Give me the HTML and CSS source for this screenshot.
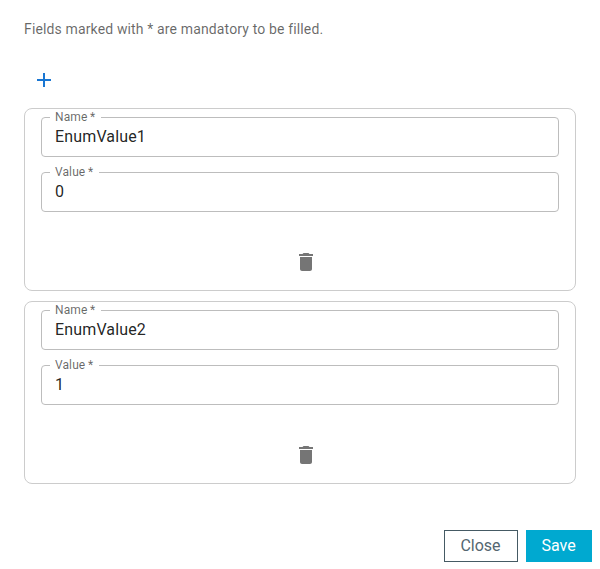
FILE: index.html
```html
<!DOCTYPE html>
<html lang="en">
<head>
<meta charset="utf-8">
<title>Enum values</title>
<link rel="stylesheet" href="styles.css">
</head>
<body>
<main class="dialog">
<p class="hint">Fields marked with * are mandatory to be filled.</p>
<button class="add" aria-label="Add"><svg width="24" height="24" viewBox="0 0 24 24"><path d="M19 13h-6v6h-2v-6H5v-2h6V5h2v6h6v2z"/></svg></button>
<section class="card">
<fieldset class="field"><legend>Name *</legend><span>EnumValue1</span></fieldset>
<fieldset class="field"><legend>Value *</legend><span>0</span></fieldset>
<button class="delete" aria-label="Delete"><svg width="24" height="24" viewBox="0 0 24 24"><path d="M6 19c0 1.100.9 2 2 2h8c1.100 0 2-.9 2-2V7H6v12zM19 4h-3.500l-1-1h-5l-1 1H5v2h14V4z"/></svg></button>
</section>
<section class="card">
<fieldset class="field"><legend>Name *</legend><span>EnumValue2</span></fieldset>
<fieldset class="field"><legend>Value *</legend><span>1</span></fieldset>
<button class="delete" aria-label="Delete"><svg width="24" height="24" viewBox="0 0 24 24"><path d="M6 19c0 1.100.9 2 2 2h8c1.100 0 2-.9 2-2V7H6v12zM19 4h-3.500l-1-1h-5l-1 1H5v2h14V4z"/></svg></button>
</section>
<footer class="actions"><button class="btn">Close</button><button class="btn primary">Save</button></footer>
</main>
</body>
</html>
```
FILE: styles.css
```css
* { box-sizing: border-box; }
body { margin: 0; background: #fff; font-family: Roboto, sans-serif; color: rgba(0,0,0,.87); }
button { font: inherit; margin: 0; padding: 0; border: 0; background: none; }
svg { display: block; fill: currentColor; }
.dialog { height: 569px; padding: 19px 24px 0; }
.hint { margin: 0; font-size: 14px; line-height: 20px; letter-spacing: .14px; color: rgba(0,0,0,.6); }
.add { display: block; margin: 29px 0 16px 8px; color: #1976d2; }
.card { height: 183px; margin-bottom: 10px; padding: 2px 16px 0; border: 1px solid #ccc; border-radius: 8px; display: flex; flex-direction: column; }
.field { margin: 0 0 9px; padding: 1px 13px 0; width: 518px; height: 46px; border: 1px solid #bdbdbd; border-radius: 4px; font-size: 16px; line-height: 24px; letter-spacing: .15px; }
.field legend { margin-left: -5px; padding: 0 5.5px 0 5px; font-size: 12px; line-height: 13px; letter-spacing: .11px; word-spacing: -.4px; color: rgba(0,0,0,.6); }
.field span { display: block; }
.delete { align-self: center; margin: 29px 0 0 12px; color: #757575; }
.actions { display: flex; justify-content: flex-end; gap: 8px; margin: 46px -16px 0 0; }
.btn { width: 74px; height: 32px; padding: 0 1px 2px 0; border: 1px solid #455a64; color: #546670; font-size: 16px; }
.primary { width: 66px; border: 0; background: #00a9d0; color: #fff; }
```
